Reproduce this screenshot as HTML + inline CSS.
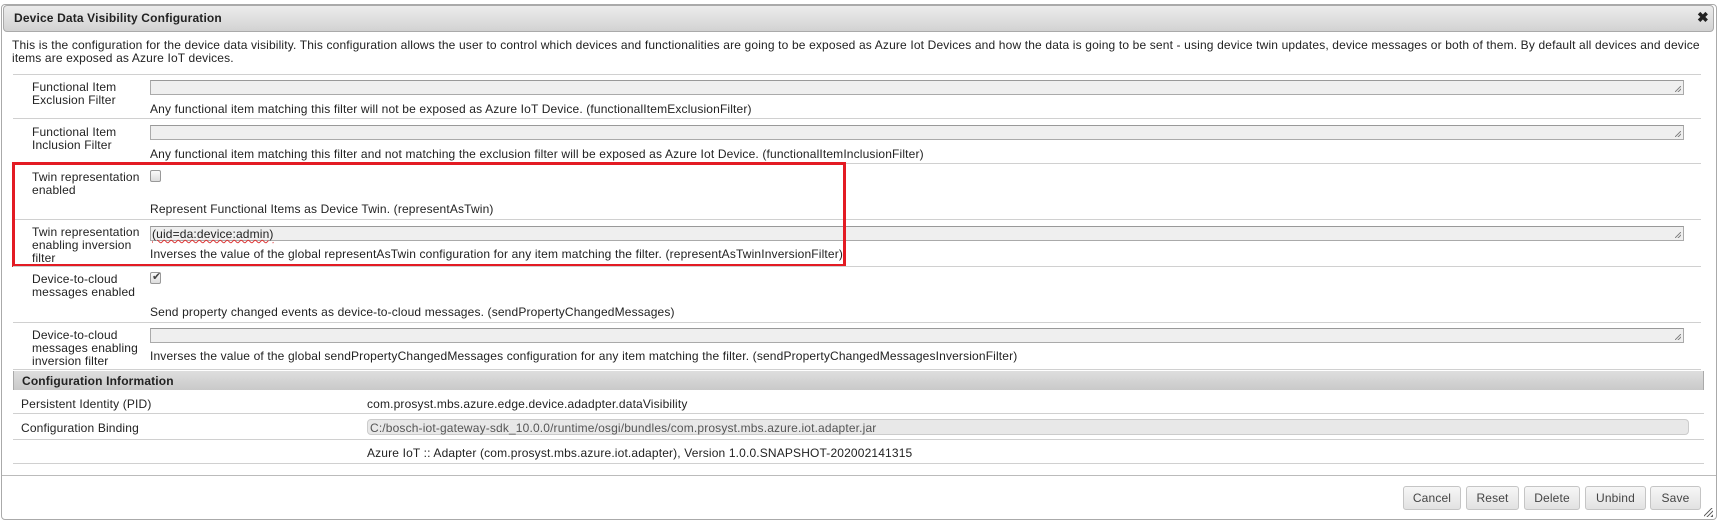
<!DOCTYPE html>
<html><head><meta charset="utf-8"><style>
*{box-sizing:border-box;margin:0;padding:0}
body{width:1719px;height:525px;background:#fff;font-family:"Liberation Sans",Tahoma,sans-serif;font-size:12px;color:#222;position:relative;overflow:hidden;letter-spacing:0.15px}
.a{position:absolute;white-space:nowrap}
.dlg{position:absolute;left:1px;top:4px;width:1716px;height:516px;border:1px solid #aaa;border-radius:4px;background:#fff}
.tb{position:absolute;left:3px;top:5px;width:1711px;height:27px;border:1px solid #aaa;border-radius:4px;background:linear-gradient(#ececec,#d2d2d2)}
.hl{position:absolute;left:13px;width:1688px;height:1px;background:#d0d0d0}
.ta{position:absolute;left:150px;width:1534px;height:15px;border:1px solid #aaa;border-top-color:#999;background:#efefef}
.ta:after{content:"";position:absolute;right:2px;bottom:2px;width:6px;height:6px;background:linear-gradient(135deg,transparent 45%,#888 45%,#888 55%,transparent 55%,transparent 70%,#888 70%,#888 80%,transparent 80%)}
.cb{position:absolute;left:150px;width:11px;height:12px;border:1px solid #999;border-radius:2px;background:linear-gradient(#fafafa,#ddd)}
.btn{position:absolute;top:486px;height:24px;border:1px solid #c5c5c5;border-radius:3px;background:linear-gradient(#f6f6f6,#e2e2e2);color:#454545;text-align:center;line-height:22px;font-size:12px}
</style></head><body>
<div class="dlg"></div>
<div class="tb"></div>
<div class="a" style="left:14px;top:11px;font-weight:bold;font-size:12px">Device Data Visibility Configuration</div>
<div class="a" style="left:1697px;top:9px;font-weight:bold;font-size:14px">✖</div>
<div class="a" style="left:12px;top:39px;line-height:13px">This is the configuration for the device data visibility. This configuration allows the user to control which devices and functionalities are going to be exposed as Azure Iot Devices and how the data is going to be sent - using device twin updates, device messages or both of them. By default all devices and device<br>items are exposed as Azure IoT devices.</div>

<div class="hl" style="top:74px"></div>
<div class="a" style="left:32px;top:81px;line-height:13px">Functional Item<br>Exclusion Filter</div>
<div class="ta" style="top:80px"></div>
<div class="a" style="left:150px;top:102px">Any functional item matching this filter will not be exposed as Azure IoT Device. (functionalItemExclusionFilter)</div>

<div class="hl" style="top:118px"></div>
<div class="a" style="left:32px;top:126px;line-height:13px">Functional Item<br>Inclusion Filter</div>
<div class="ta" style="top:125px"></div>
<div class="a" style="left:150px;top:147px">Any functional item matching this filter and not matching the exclusion filter will be exposed as Azure Iot Device. (functionalItemInclusionFilter)</div>

<div class="hl" style="top:163px"></div>
<div class="a" style="left:32px;top:171px;line-height:13px">Twin representation<br>enabled</div>
<div class="cb" style="top:170px"></div>
<div class="a" style="left:150px;top:202px">Represent Functional Items as Device Twin. (representAsTwin)</div>

<div class="hl" style="top:219px"></div>
<div class="a" style="left:32px;top:226px;line-height:13px">Twin representation<br>enabling inversion<br>filter</div>
<div class="ta" style="top:226px"></div>
<div class="a" style="left:152px;top:227px;text-decoration:underline wavy #d33;text-decoration-thickness:1px">(uid=da:device:admin)</div>
<div class="a" style="left:150px;top:247px">Inverses the value of the global representAsTwin configuration for any item matching the filter. (representAsTwinInversionFilter)</div>
<div class="a" style="left:12px;top:162px;width:834px;height:105px;border:3px solid #e31b23"></div>

<div class="hl" style="top:266px"></div>
<div class="a" style="left:32px;top:273px;line-height:13px">Device-to-cloud<br>messages enabled</div>
<div class="cb" style="top:272px"></div>
<div class="a" style="left:152px;top:270px;font-size:11px;color:#444">✔</div>
<div class="a" style="left:150px;top:305px">Send property changed events as device-to-cloud messages. (sendPropertyChangedMessages)</div>

<div class="hl" style="top:322px"></div>
<div class="a" style="left:32px;top:329px;line-height:13px">Device-to-cloud<br>messages enabling<br>inversion filter</div>
<div class="ta" style="top:328px"></div>
<div class="a" style="left:150px;top:349px">Inverses the value of the global sendPropertyChangedMessages configuration for any item matching the filter. (sendPropertyChangedMessagesInversionFilter)</div>

<div class="hl" style="top:369px"></div>
<div class="a" style="left:13px;top:371px;width:1691px;height:19px;background:linear-gradient(#dedede,#c9c9c9);border-left:1px solid #aaa;border-right:1px solid #aaa"></div>
<div class="a" style="left:22px;top:374px;font-weight:bold">Configuration Information</div>

<div class="a" style="left:21px;top:397px">Persistent Identity (PID)</div>
<div class="a" style="left:367px;top:397px">com.prosyst.mbs.azure.edge.device.adadpter.dataVisibility</div>
<div class="hl" style="top:413px;width:1691px"></div>
<div class="a" style="left:21px;top:421px">Configuration Binding</div>
<div class="a" style="left:367px;top:419px;width:1322px;height:16px;border:1px solid #ccc;border-radius:4px;background:#e8e8e8"></div>
<div class="a" style="left:370px;top:421px;color:#555">C:/bosch-iot-gateway-sdk_10.0.0/runtime/osgi/bundles/com.prosyst.mbs.azure.iot.adapter.jar</div>
<div class="hl" style="top:439px;width:1691px"></div>
<div class="a" style="left:367px;top:446px">Azure IoT :: Adapter (com.prosyst.mbs.azure.iot.adapter), Version 1.0.0.SNAPSHOT-202002141315</div>
<div class="hl" style="top:463px;width:1691px"></div>
<div class="a" style="left:2px;top:475px;width:1714px;height:1px;background:#bbb"></div>

<div class="btn" style="left:1403px;width:58px">Cancel</div>
<div class="btn" style="left:1466px;width:53px">Reset</div>
<div class="btn" style="left:1524px;width:56px">Delete</div>
<div class="btn" style="left:1585px;width:61px">Unbind</div>
<div class="btn" style="left:1650px;width:51px">Save</div>
<div class="a" style="left:1704px;top:508px;width:9px;height:9px;background:linear-gradient(135deg,transparent 40%,#666 40%,#666 48%,transparent 48%,transparent 62%,#666 62%,#666 70%,transparent 70%,transparent 84%,#666 84%)"></div>
</body></html>
